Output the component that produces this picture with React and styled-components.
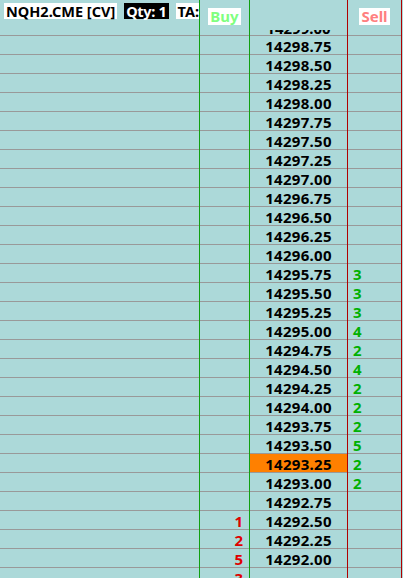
import React from 'react';
import styled, { createGlobalStyle } from 'styled-components';

const GlobalStyle = createGlobalStyle`
  html, body {
    margin: 0;
    padding: 0;
    background: #acd9d9;
  }
  body {
    font-family: 'Noto Sans', 'Open Sans', sans-serif;
    font-weight: 700;
  }
`;

const ROW_H = 18;

// ladder data, top to bottom
const rows = [];
for (let i = 0; i < 28; i++) {
  rows.push({ price: (14298.75 - i * 0.25).toFixed(2) });
}
rows.push({ price: '', buy: 3 }); // partial row at the bottom

const sellQty = {
  '14295.75': 3, '14295.50': 3, '14295.25': 3, '14295.00': 4,
  '14294.75': 2, '14294.50': 4, '14294.25': 2, '14294.00': 2,
  '14293.75': 2, '14293.50': 5, '14293.25': 2, '14293.00': 2,
};
const buyQty = { '14292.50': 1, '14292.25': 2, '14292.00': 5 };

const LAST = '14293.25';

const Ladder = styled.div`
  display: flex;
  width: 402px;
  height: 578px;
  overflow: hidden;
  background: #acd9d9;
`;

const Column = styled.div`
  flex: none;
  width: ${(p) => p.$w}px;
  border-right: 1px solid ${(p) => p.$line};
  display: flex;
  flex-direction: column;
`;

const HeaderCell = styled.div`
  flex: none;
  height: 36px;
  box-sizing: border-box;
  border-bottom: 1px solid #999;
  overflow: hidden;
  display: flex;
  justify-content: ${(p) => p.$justify || 'center'};
  align-items: flex-start;
  gap: 7px;
  padding: ${(p) => (p.$left ? '3px 0 0 4px' : '8px 0 0 0')};
`;

const Tag = styled.span`
  flex: none;
  display: block;
  height: 16px;
  line-height: 16px;
  font-size: 14.5px;
  padding: 0 2px;
  white-space: nowrap;
  letter-spacing: ${(p) => p.$ls || 0}px;
  background: ${(p) => p.$bg || '#fff'};
  color: ${(p) => p.$color || '#000'};
`;

const SideTag = styled(Tag)`
  height: 17px;
  line-height: 17px;
  font-size: 15px;
`;

const PeekHeader = styled.div`
  flex: none;
  height: 36px;
  box-sizing: border-box;
  border-bottom: 1px solid #999;
  padding-top: 30px;
`;

const PeekWindow = styled.div`
  height: 5px;
  overflow: hidden;
`;

const PeekText = styled.div`
  margin-top: -12px;
  height: ${ROW_H}px;
  line-height: ${ROW_H}px;
  padding-top: 1px;
  font-size: 15px;
  text-align: center;
  color: #000;
`;

const Cell = styled.div`
  flex: none;
  height: ${ROW_H - 1}px;
  padding-top: 1px;
  border-bottom: 1px solid #999;
  line-height: ${ROW_H}px;
  font-size: 15px;
  white-space: nowrap;
  text-align: ${(p) => p.$align || 'center'};
  color: ${(p) => p.$color || '#000'};
  background: ${(p) => (p.$hl ? '#ff8000' : 'transparent')};
  padding-left: ${(p) => p.$pl || 0}px;
  padding-right: ${(p) => p.$pr || 0}px;
`;

const Price = styled.span`
  letter-spacing: 0.3px;
`;

export default function App() {
  return (
    <>
      <GlobalStyle />
      <Ladder>
        <Column $w={199} $line="#10a010">
          <HeaderCell $left $justify="flex-start">
            <Tag>NQH2.CME [CV]</Tag>
            <Tag $bg="#000" $color="#fff" $ls={-0.3}>Qty: 1</Tag>
            <Tag>TA:</Tag>
          </HeaderCell>
          {rows.map((r, i) => (
            <Cell key={i} />
          ))}
        </Column>

        <Column $w={49} $line="#10a010">
          <HeaderCell>
            <SideTag $color="#80ff80">Buy</SideTag>
          </HeaderCell>
          {rows.map((r, i) => (
            <Cell key={i} $align="right" $pr={6} $color="#e00000">
              {buyQty[r.price] || r.buy || ''}
            </Cell>
          ))}
        </Column>

        <Column $w={97} $line="#b00000">
          <PeekHeader>
            <PeekWindow>
              <PeekText>14299.00</PeekText>
            </PeekWindow>
          </PeekHeader>
          {rows.map((r, i) => (
            <Cell key={i} $hl={r.price === LAST}>
              <Price>{r.price}</Price>
            </Cell>
          ))}
        </Column>

        <Column $w={53} $line="#b00000">
          <HeaderCell>
            <SideTag $color="#ff8080">Sell</SideTag>
          </HeaderCell>
          {rows.map((r, i) => (
            <Cell key={i} $align="left" $pl={5} $color="#00b000">
              {sellQty[r.price] || ''}
            </Cell>
          ))}
        </Column>
      </Ladder>
    </>
  );
}
